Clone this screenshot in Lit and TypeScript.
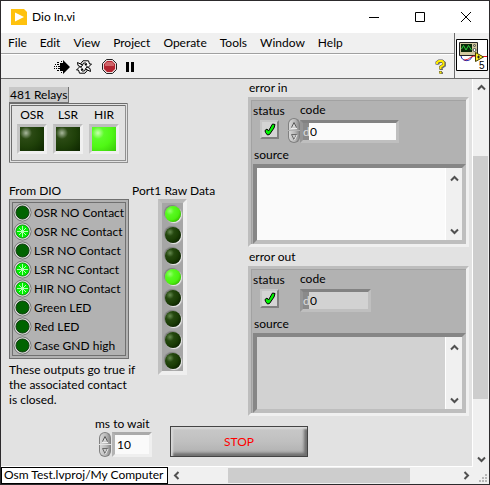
import { LitElement, html, css, svg } from "lit";
import { customElement, property } from "lit/decorators.js";
import { classMap } from "lit/directives/class-map.js";

const base = css`
  * { box-sizing: border-box; }
  button, input, textarea {
    font: inherit;
    color: inherit;
    margin: 0;
    padding: 0;
    border: 0;
    border-radius: 0;
    background: none;
    outline: none;
  }
  svg { display: block; }
`;

const chevrons: Record<string, string> = {
  up: "M1 6.5L4.5 3L8 6.5",
  down: "M1 2.5L4.5 6L8 2.5",
  left: "M6.5 1L3 4.5L6.5 8",
  right: "M2.5 1L6 4.5L2.5 8",
};

const chevron = (dir: string) => html`
  <svg width="9" height="9" viewBox="0 0 9 9" fill="none" stroke="#505050" stroke-width="2">
    <path d=${chevrons[dir]} />
  </svg>
`;

@customElement("step-buttons")
class StepButtons extends LitElement {
  static styles = [base, css`
    :host { display: flex; flex-direction: column; gap: 1px; width: 12px; flex: none; }
    .step {
      display: grid;
      place-items: center;
      width: 12px;
      height: 12px;
      border: 1px solid #808080;
      background: linear-gradient(90deg, #d8d8d8, #b8b8b8 60%, #8c8c8c);
    }
    .up { border-radius: 6px 6px 0 0; border-bottom: 0; }
    .down { border-radius: 0 0 6px 6px; border-top: 0; }
  `];
  render() {
    return html`
      <button class="step up" aria-label="Increase">
        <svg width="8" height="8" viewBox="0 0 8 8"><path d="M1.500 6.500L4 1.500L6.500 6.500" fill="#d8d8d8" stroke="#5a5a5a" /><path d="M1 7.500h6" stroke="#eee" /></svg>
      </button>
      <button class="step down" aria-label="Decrease">
        <svg width="8" height="8" viewBox="0 0 8 8"><path d="M1.500 1.500h5L4 6.500z" fill="#c8c8c8" stroke="#6a6a6a" /><path d="M4.500 7L7 2" stroke="#eee" /></svg>
      </button>
    `;
  }
}

@customElement("error-cluster")
class ErrorCluster extends LitElement {
  @property() heading = "";
  @property({ type: Boolean }) indicator = false;

  static styles = [base, css`
    :host { display: block; }
    .heading { padding-left: 1px; margin: 0; font: inherit; }
    .box {
      margin-top: 1px;
      padding: 2px 0 0 2px;
      border: 3px solid;
      border-color: #bdbdbd #f0f0f0 #f0f0f0 #bdbdbd;
      background: #b2b2b2;
      box-shadow: inset 1px 1px #a2a2a2;
    }
    .top { display: flex; }
    .status { width: 35px; padding-top: 1px; }
    .status label, .code label, .source label { display: block; white-space: nowrap; }
    .tick { display: grid; width: 19px; height: 19px; margin: 1px 0 0 7px; }
    .tick input {
      grid-area: 1 / 1;
      appearance: none;
      width: 19px;
      height: 19px;
      border: 2px solid;
      border-color: #c6c6c6 #808080 #808080 #c6c6c6;
      background: #d4d4d4;
    }
    .tick svg { grid-area: 1 / 1; place-self: center; visibility: hidden; pointer-events: none; }
    .tick input:checked + svg { visibility: visible; }
    .code { display: grid; grid-template-columns: 12px auto; }
    .code label { grid-column: 2; padding-bottom: 2px; }
    .code step-buttons { margin-top: -2px; }
    .field {
      grid-column: 2;
      display: flex;
      width: 99px;
      height: 23px;
      border: 3px solid;
      border-color: #828282 #bfbfbf #bfbfbf #969696;
      background: #fafafa;
    }
    .radix { width: 6px; line-height: 17px; background: #8a8a8a; color: #dcdcdc; overflow: hidden; }
    .field input { flex: 1; min-width: 0; padding-left: 1px; }
    .source label { padding-left: 1px; }
    .source { margin-top: 4px; }
    .text {
      display: flex;
      height: 80px;
      margin-top: 1px;
      border: 4px solid;
      border-color: #868686 #bebebe #bebebe #868686;
      background: #fafafa;
    }
    .text textarea { flex: 1; min-width: 0; resize: none; }
    .bar {
      display: flex;
      flex-direction: column;
      justify-content: space-between;
      align-items: center;
      width: 17px;
      padding: 6px 0 4px;
      background: #f0f0f0;
      border-left: 1px solid #fff;
    }
    .out .field { width: 71px; background: #d2d2d2; }
    .out .text { background: #d2d2d2; }
  `];

  render() {
    return html`
      <h2 class="heading">${this.heading}</h2>
      <div class=${classMap({ box: true, out: this.indicator })}>
        <div class="top">
          <div class="status">
            <label for="status">status</label>
            <div class="tick">
              <input id="status" type="checkbox" checked ?disabled=${this.indicator} />
              <svg width="12" height="13" viewBox="0 0 12 13">
                <path d="M1 7.500L3 6L4.500 8L8.500 1L11 1.500L10 5L5.500 11.500L3.500 12L1.500 9.500z" fill="#00f400" stroke="#000" />
              </svg>
            </div>
          </div>
          <div class="code">
            <label for="code">code</label>
            ${this.indicator ? "" : html`<step-buttons></step-buttons>`}
            <div class="field">
              <span class="radix">d</span>
              <input id="code" value="0" ?readonly=${this.indicator} />
            </div>
          </div>
        </div>
        <div class="source">
          <label for="source">source</label>
          <div class="text">
            <textarea id="source" ?readonly=${this.indicator}></textarea>
            <div class="bar">
              <button aria-label="Scroll up">${chevron("up")}</button>
              <button aria-label="Scroll down">${chevron("down")}</button>
            </div>
          </div>
        </div>
      </div>
    `;
  }
}

const menus = ["File", "Edit", "View", "Project", "Operate", "Tools", "Window", "Help"];
const relays = [
  { name: "OSR", on: false },
  { name: "LSR", on: false },
  { name: "HIR", on: true },
];
const dio = [
  { name: "OSR NO Contact", on: false },
  { name: "OSR NC Contact", on: true },
  { name: "LSR NO Contact", on: false },
  { name: "LSR NC Contact", on: true },
  { name: "HIR NO Contact", on: true },
  { name: "Green LED", on: false },
  { name: "Red LED", on: false },
  { name: "Case GND high", on: false },
];
const port = [true, false, false, true, false, false, false, false];

const rays = svg`
  <path d="M9.500 4v11M4 9.500h11M6 6l7 7M13 6l-7 7" stroke="#b4ffb4" />
`;

@customElement("app-root")
class AppRoot extends LitElement {
  static styles = [base, css`
    :host {
      display: flex;
      flex-direction: column;
      height: 100vh;
      box-sizing: border-box;
      border: 1px solid #2c2a2c;
      overflow: hidden;
      background: #f0f0f0;
      color: #000;
      font: 12px/16px Lato, "Noto Sans", sans-serif;
    }
    .title { display: flex; align-items: center; height: 32px; flex: none; padding-left: 10px; background: #fff; }
    .title h1 { flex: 1; margin: 0 0 0 5px; font: inherit; }
    .win { display: grid; place-items: center; width: 46px; height: 30px; }
    .head { display: flex; flex: none; border-bottom: 1px solid #6c6c6c; }
    .bars { flex: 1; }
    .menu { display: flex; gap: 13px; height: 21px; padding: 0 7px; border-bottom: 1px solid #a0a0a0; }
    .menu button { line-height: 18px; }
    .tools { display: flex; align-items: center; height: 24px; padding: 0 7px 0 53px; border-top: 1px solid #fff; }
    .tools .sync { margin-left: 6px; }
    .tools .abort { margin-left: 10px; }
    .tools .pause { margin-left: 8px; }
    .tools .help { margin-left: auto; }
    .vi { padding: 6px 1px 5px; border-left: 1px solid #6c6c6c; }
    .main { display: flex; flex: 1; min-height: 0; }
    .panel { flex: 1; min-width: 0; padding: 1px 3px 0 8px; background: #e2e2e2; overflow: hidden; border-bottom: 1px solid #fff; }
    .upper { display: flex; gap: 35px; }
    .io { display: grid; grid-template-columns: 120px 81px; gap: 20px 3px; align-content: start; padding-top: 7px; }
    .relays { grid-column: 1 / 3; }
    .tag { width: max-content; margin: 0; padding: 0 1px 0 1px; font: inherit; line-height: 15px; background: #c8c8c8; border: solid #707070; border-width: 0 1px 1px 0; }
    .relaybox { display: flex; gap: 6px; width: 119px; height: 60px; padding: 1px 5px; border: 3px double #777; border-color: #6c6c6c #909090 #909090 #6c6c6c; }
    .relay { width: 30px; text-align: center; }
    .square {
      display: block;
      width: 30px;
      height: 30px;
      margin-top: 1px;
      border: 3px solid;
      border-color: #bdbdbd #f0f0f0 #f0f0f0 #c4c4c4;
      background: radial-gradient(circle at 6px 6px, #a9b89d, #2b4a14 6px, #1f4009 14px, #0c2400 26px);
    }
    .square.on { background: radial-gradient(circle at 6px 6px, #c8ffb0, #5cfc28 6px, #50f815 14px, #31bd04 28px); }
    .label { display: block; margin: 0; font: inherit; white-space: nowrap; }
    .list { margin: 0; padding: 0; list-style: none; border: 4px double #707070; background: #b2b2b2; }
    .list li { display: flex; align-items: center; gap: 2px; height: 19px; white-space: nowrap; }
    .note { margin: 3px -10px 0 0; line-height: 15px; white-space: nowrap; }
    .array {
      width: 29px;
      margin-left: 26px;
      border: 4px solid;
      border-color: #b8b8b8 #efefef #efefef #c0c0c0;
      background: #a6a6a6;
      display: grid;
      justify-items: center;
    }
    .slot { display: grid; place-items: center; height: 21px; }
    .bulb {
      width: 16px;
      height: 16px;
      border-radius: 50%;
      background: radial-gradient(circle at 5px 5px, #668a50, #25480f 4px, #1b3d06 8px, #0d2600 12px);
      box-shadow: -1px -1px 1px #7e7e7e, 1px 1px 1px #eee;
    }
    .bulb.on { background: radial-gradient(circle at 5px 5px, #98ff70, #58fa20 4px, #4cf010 9px, #38c400 12px); }
    .errors { display: flex; flex-direction: column; gap: 2px; flex: 1; min-width: 0; }
    .lower { display: flex; align-items: flex-end; }
    .wait { display: flex; flex-wrap: wrap; width: 75px; margin-left: 86px; }
    .wait label { width: 75px; white-space: nowrap; }
    .wait step-buttons { margin: 0 1px 0 4px; }
    .wait input {
      width: 40px;
      height: 25px;
      padding-left: 2px;
      border: 3px solid;
      border-color: #aaa #efefef #efefef #b4b4b4;
      background: #fafafa;
    }
    .stop {
      width: 138px;
      height: 31px;
      color: #f00;
      border: 1px solid #444;
      background: linear-gradient(#c9c9c9, #c0c0c0 50%, #aeaeae);
      box-shadow: inset 2px 2px 2px #d8d8d8, inset -3px -3px 3px #707070;
    }
    .vbar { display: flex; flex-direction: column; align-items: center; width: 17px; border-left: 1px solid #fff; padding: 4px 0 3px; }
    .vbar .track { flex: 1; width: 15px; margin: 0 1px 0 0; padding: 64px 0 56px; display: flex; }
    .thumb { flex: 1; background: #cdcdcd; }
    .foot { display: flex; align-items: stretch; height: 17px; flex: none; }
    .target { width: 167px; border: 1px solid #000; background: #fff; padding-left: 2px; line-height: 14px; white-space: nowrap; }
    .hbar { display: flex; flex: 1; align-items: center; padding-left: 4px; }
    .hbar .track { display: flex; flex: 1; height: 15px; padding: 0 52px 0 47px; }
    .grip { align-self: end; margin: 0 2px 2px 8px; }
  `];

  render() {
    return html`
      <header class="title">
        <svg width="16" height="16" viewBox="0 0 16 16"><path d="M0 0h13l3 3v13H0z" fill="#ffc20e" /><path d="M4 3.500v9L13 8z" fill="#fff" /></svg>
        <h1>Dio In.vi</h1>
        <button class="win" aria-label="Minimize"><svg width="10" height="10"><path d="M0 5.500h10" stroke="#000" /></svg></button>
        <button class="win" aria-label="Maximize"><svg width="10" height="10"><path d="M.5.5h9v9h-9z" fill="none" stroke="#000" /></svg></button>
        <button class="win" aria-label="Close"><svg width="10" height="10"><path d="M0 0l10 10M10 0L0 10" stroke="#000" /></svg></button>
      </header>
      <div class="head">
        <div class="bars">
          <nav class="menu">${menus.map((m) => html`<button>${m}</button>`)}</nav>
          <div class="tools">
            <button class="run" aria-label="Run">
              <svg width="16" height="14" viewBox="0 0 16 14">
                <path d="M9 0l7 7l-7 7v-3H6V3h3z" fill="#000" />
                <path d="M1 4.500h1M3 4.500h2M0 6.500h1M2 6.500h1M4 6.500h2M0 8.500h1M2 8.500h1M4 8.500h2M3 10.500h2M3 2.500h2M7 1.500h1M7 12.500h1" stroke="#000" />
              </svg>
            </button>
            <button class="sync" aria-label="Run continuously">
              <svg width="16" height="14" viewBox="0 0 16 14" fill="#fff" stroke="#000">
                <path d="M4.500 4L7 .8h5.500l1 3.200h2L12 7.500L9 4.500h1.800L10 3H7.500L6.500 5z" />
                <path d="M11.500 10L9 13.200H3.500l-1-3.200H.5L4 6.500L7 9.500H5.200L6 11h2.500l1-2z" />
                <path d="M1.500 2.500L6.500 5L5 7L2 5.500zM14.500 11.500L9.500 9L11 7l3 1.500z" />
              </svg>
            </button>
            <button class="abort" aria-label="Abort">
              <svg width="15" height="15" viewBox="0 0 15 15">
                <path d="M4.500.5h6l4 4v6l-4 4h-6l-4-4v-6z" fill="#e9dada" stroke="#222" />
                <path d="M5 2h5l3 3v5l-3 3H5l-3-3V5z" fill="#b32430" />
                <path d="M5 3h5l2 2v2H3V5z" fill="#ce6469" />
              </svg>
            </button>
            <button class="pause" aria-label="Pause"><svg width="10" height="10"><path d="M1 0h3v10H1zM6 0h3v10H6z" /></svg></button>
            <button class="help" aria-label="Context help">
              <svg width="12" height="16" viewBox="0 0 12 16" fill="none">
                <path d="M3 5.500V4L5 2.500h2.500L9.500 4v2.500L6.500 8.500V11M6.500 13v2" stroke="#777" stroke-width="3" />
                <path d="M2 5.500V3.500L4 2h3l1.500 1.500v2.500L5.500 8v2.500M5.500 12v2.500" stroke="#555" stroke-width="3" />
                <path d="M2 5V3.500L4 2h3l1.500 1.500v2.500L5.500 8v2M5.500 12.500v2" stroke="#ffec00" stroke-width="2" />
              </svg>
            </button>
          </div>
        </div>
        <div class="vi">
          <svg width="32" height="32" viewBox="0 0 32 32">
            <path d="M.5.5h31v31H.5z" fill="#fff" stroke="#000" />
            <path d="M3.500 3.500h18v13h-18z" fill="#d2c9a0" stroke="#222" />
            <path d="M5 5h11v8H5z" fill="#0a2a0a" />
            <path d="M5.500 10L7.500 6.500L10 11L12.500 6.500L15.500 11" fill="none" stroke="#2fd03a" />
            <circle cx="18.500" cy="6.500" r="1" fill="none" stroke="#444" />
            <circle cx="18.500" cy="11" r="1.500" fill="#fff" stroke="#444" />
            <path d="M5 17c1 6 9 6 11 1" fill="none" stroke="#1020b0" />
            <path d="M8 21c6 0 5-4 12-4" fill="none" stroke="#e01020" />
            <path d="M27 17.500h4" stroke="#e01020" />
            <path d="M19.500 13.500v9l8-4.500z" fill="#ffee20" stroke="#443c00" />
            <path d="M21 18h3M22.500 16.500v3" stroke="#222" />
            <text x="23" y="30" font-size="10" font-family="Liberation Sans">5</text>
          </svg>
        </div>
      </div>
      <div class="main">
        <main class="panel">
          <div class="upper">
            <div class="io">
              <section class="relays">
                <h2 class="tag">481 Relays</h2>
                <div class="relaybox">
                  ${relays.map((r) => html`
                    <div class="relay">${r.name}<span class=${classMap({ square: true, on: r.on })} role="img" aria-label=${r.on ? "on" : "off"}></span></div>
                  `)}
                </div>
              </section>
              <section>
                <h2 class="label">From DIO</h2>
                <ul class="list">
                  ${dio.map((d) => html`
                    <li>
                      <svg width="19" height="19" viewBox="0 0 19 19">
                        <circle cx="9.500" cy="9.500" r="8.500" fill="#c4c4c4" stroke="#707070" />
                        <circle cx="9.500" cy="9.500" r="7.500" fill="none" stroke="#ddd" />
                        <circle cx="9.500" cy="9.500" r="6.500" fill=${d.on ? "#00f000" : "#006400"} stroke=${d.on ? "#10a010" : "#104010"} />
                        ${d.on ? rays : ""}
                      </svg>
                      ${d.name}
                    </li>
                  `)}
                </ul>
                <p class="note">These outputs go true if<br />the associated contact<br />is closed.</p>
              </section>
              <section>
                <h2 class="label">Port1 Raw Data</h2>
                <div class="array">
                  ${port.map((on) => html`<div class="slot"><span class=${classMap({ bulb: true, on })} role="img" aria-label=${on ? "on" : "off"}></span></div>`)}
                </div>
              </section>
            </div>
            <div class="errors">
              <error-cluster heading="error in"></error-cluster>
              <error-cluster heading="error out" indicator></error-cluster>
            </div>
          </div>
          <div class="lower">
            <div class="wait">
              <label for="wait">ms to wait</label>
              <step-buttons></step-buttons>
              <input id="wait" value="10" />
            </div>
            <button class="stop">STOP</button>
          </div>
        </main>
        <div class="vbar">
          <button aria-label="Scroll up">${chevron("up")}</button>
          <div class="track"><div class="thumb"></div></div>
          <button aria-label="Scroll down">${chevron("down")}</button>
        </div>
      </div>
      <footer class="foot">
        <div class="target">Osm Test.lvproj/My Computer</div>
        <div class="hbar">
          <button aria-label="Scroll left">${chevron("left")}</button>
          <div class="track"><div class="thumb"></div></div>
          <button aria-label="Scroll right">${chevron("right")}</button>
          <svg class="grip" width="8" height="8"><path d="M6 0h2v2H6zM3 3h2v2H3zM6 3h2v2H6zM0 6h2v2H0zM3 6h2v2H3zM6 6h2v2H6z" fill="#b8b8b8" /></svg>
        </div>
      </footer>
    `;
  }
}
